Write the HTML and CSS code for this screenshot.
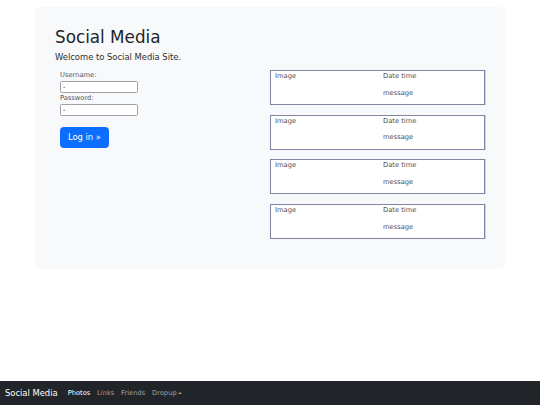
FILE: index.html
```html
<!DOCTYPE html>
<html lang="en">
<head>
<meta charset="utf-8">
<title>Social Media</title>
<link rel="stylesheet" href="styles.css">
</head>
<body>
<main class="container">
  <section class="jumbotron">
    <h1 class="title">Social Media</h1>
    <p class="lead">Welcome to Social Media Site.</p>
    <div class="row">
      <div class="col-left">
        <form class="login">
          <label class="label" for="user">Username:</label>
          <input class="input" id="user" type="text" value="-">
          <label class="label" for="pass">Password:</label>
          <input class="input" id="pass" type="text" value="-">
          <button class="btn" type="button">Log in &raquo;</button>
        </form>
      </div>
      <div class="col-right">
        <div class="post">
          <div class="post-img"><p class="txt">Image</p></div>
          <div class="post-body"><p class="txt">Date time</p><p class="txt">message</p></div>
        </div>
        <div class="post">
          <div class="post-img"><p class="txt">Image</p></div>
          <div class="post-body"><p class="txt">Date time</p><p class="txt">message</p></div>
        </div>
        <div class="post">
          <div class="post-img"><p class="txt">Image</p></div>
          <div class="post-body"><p class="txt">Date time</p><p class="txt">message</p></div>
        </div>
        <div class="post">
          <div class="post-img"><p class="txt">Image</p></div>
          <div class="post-body"><p class="txt">Date time</p><p class="txt">message</p></div>
        </div>
      </div>
    </div>
  </section>
</main>
<nav class="navbar">
  <span class="brand">Social Media</span>
  <a class="nav-link active">Photos</a>
  <a class="nav-link">Links</a>
  <a class="nav-link">Friends</a>
  <a class="nav-link">Dropup<span class="caret"></span></a>
</nav>
</body>
</html>
```
FILE: styles.css
```css
* { box-sizing: border-box; }
html, body { margin: 0; padding: 0; }
body {
  font-family: "DejaVu Sans", sans-serif;
  font-size: 6.72px;
  line-height: 1.5;
  color: #3c4146;
  background: #fff;
  width: 540px;
  height: 405px;
  overflow: hidden;
}
.container {
  width: 470px;
  margin: 0 auto;
  padding-top: 7px;
}
.jumbotron {
  background: #f8f9fa;
  border-radius: 5px;
  padding: 20px 20px 30px 20px;
}
.title {
  font-size: 16.8px;
  font-weight: 400;
  line-height: 1.2;
  color: #212529;
  margin: 0 0 3.4px 0;
}
.lead {
  font-size: 8.4px;
  color: #2a2e33;
  margin: 0 0 6.7px 0;
}
.row {
  display: flex;
}
.col-left, .col-right {
  width: 215px;
}
.login {
  display: flex;
  flex-direction: column;
  align-items: flex-start;
  padding-left: 5px;
}
.label {
  display: block;
  line-height: 10.5px;
  height: 11px;
  color: #50555a;
}
.input {
  width: 78px;
  height: 12px;
  margin: 0;
  padding: 0 2px;
  font-family: "DejaVu Sans", sans-serif;
  font-size: 6.72px;
  color: #000;
  border: 1px solid #a0a0a8;
  border-radius: 1.5px;
  background: #fff;
}
.btn {
  margin-top: 11px;
  font-family: "DejaVu Sans", sans-serif;
  font-size: 8.4px;
  line-height: 12.6px;
  padding: 3.4px 6.9px;
  color: #fff;
  background: #0d6efd;
  border: 0.5px solid #0d6efd;
  border-radius: 3.4px;
}
.post {
  display: flex;
  height: 35px;
  border: 1px solid #8383a6;
  box-shadow: 1px 0 0 #d4d4e8;
  background: #fff;
  margin-bottom: 9.7px;
}
.post:last-child { margin-bottom: 0; }
.post-img {
  width: 50%;
  padding: 0 4px;
}
.post-body {
  width: 50%;
  padding: 0 4px 0 5.5px;
}
.txt {
  margin: 0 0 6.7px 0;
  line-height: 10px;
  color: #4a4f55;
}
.navbar {
  position: fixed;
  left: 0;
  right: 0;
  bottom: 0;
  height: 24px;
  background: #212529;
  display: flex;
  align-items: center;
  padding: 0 5px;
}
.brand {
  font-size: 8.4px;
  color: #fff;
  margin-right: 6.7px;
}
.nav-link {
  color: rgba(255, 255, 255, 0.55);
  padding: 0 3.36px;
  font-size: 6.72px;
}
.nav-link.active { color: #fff; }
.caret {
  display: inline-block;
  margin-left: 1.7px;
  vertical-align: 1.3px;
  border-left: 2px solid transparent;
  border-right: 2px solid transparent;
  border-bottom: 2px solid rgba(255, 255, 255, 0.55);
}
```
